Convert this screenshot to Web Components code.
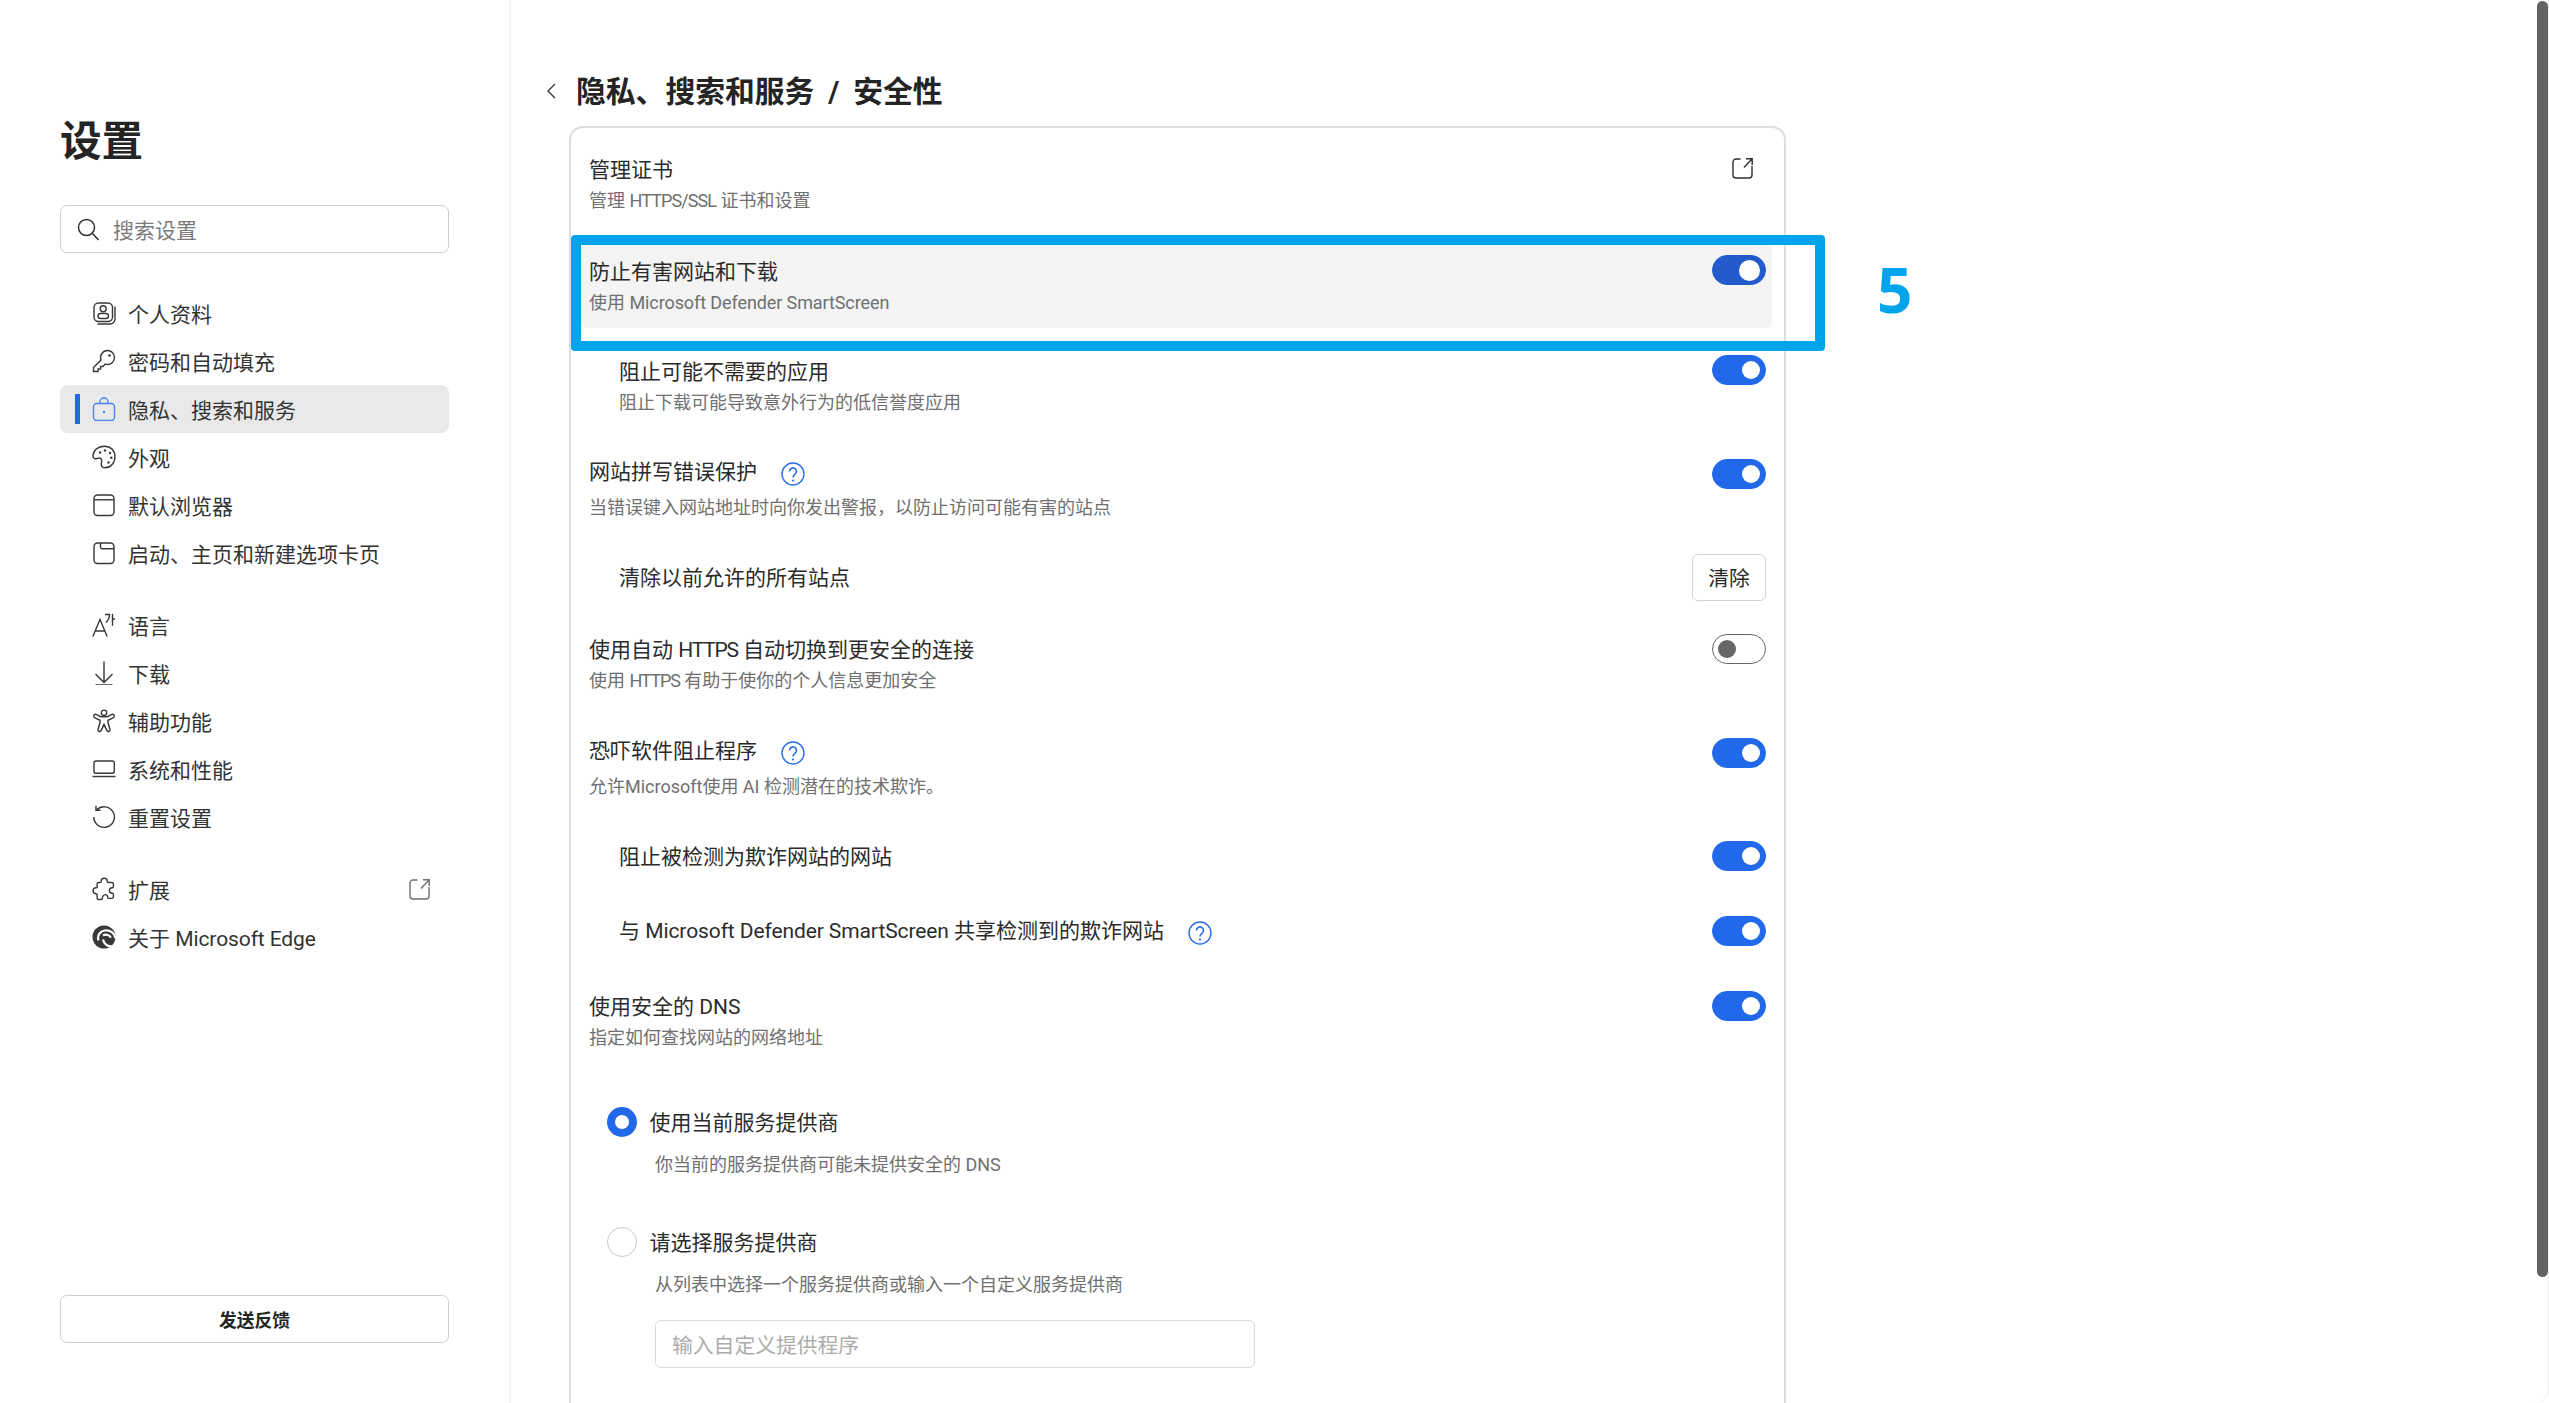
<!DOCTYPE html>
<html lang="zh-CN">
<head>
<meta charset="utf-8">
<title>设置</title>
<style>
  html, body { margin: 0; background: #fff; overflow: hidden; }
  body { font-family: Roboto, "Noto Sans CJK SC", sans-serif; color: #2b2b2b; }
</style>
</head>
<body>
<settings-app>
  <settings-sidebar slot="sidebar">
    <nav-group>
      <nav-item icon="profile">个人资料</nav-item>
      <nav-item icon="key">密码和自动填充</nav-item>
      <nav-item icon="lock" active>隐私、搜索和服务</nav-item>
      <nav-item icon="palette">外观</nav-item>
      <nav-item icon="browser">默认浏览器</nav-item>
      <nav-item icon="start">启动、主页和新建选项卡页</nav-item>
    </nav-group>
    <nav-group style="margin-top:24px">
      <nav-item icon="language">语言</nav-item>
      <nav-item icon="download">下载</nav-item>
      <nav-item icon="access">辅助功能</nav-item>
      <nav-item icon="laptop">系统和性能</nav-item>
      <nav-item icon="reset">重置设置</nav-item>
    </nav-group>
    <nav-group style="margin-top:24px">
      <nav-item icon="puzzle" external>扩展</nav-item>
      <nav-item icon="edge">关于 <span style="letter-spacing:-.1px">Microsoft Edge</span></nav-item>
    </nav-group>
  </settings-sidebar>

  <settings-main slot="main">
    <setting-row style="margin-top:15px">
      管理证书
      <span slot="sub">管理 <span style="letter-spacing:-.9px">HTTPS/SSL</span> 证书和设置</span>
      <ext-icon slot="end"></ext-icon>
    </setting-row>
    <setting-row hover style="margin-top:19px">
      防止有害网站和下载
      <span slot="sub">使用 <span style="letter-spacing:-.1px">Microsoft Defender SmartScreen</span></span>
      <toggle-switch slot="end" on hover></toggle-switch>
    </setting-row>
    <setting-row indent style="margin-top:17px">
      阻止可能不需要的应用
      <span slot="sub">阻止下载可能导致意外行为的低信誉度应用</span>
      <toggle-switch slot="end" on></toggle-switch>
    </setting-row>
    <setting-row tall style="margin-top:17px">
      网站拼写错误保护
      <help-icon slot="hint"></help-icon>
      <span slot="sub">当错误键入网站地址时向你发出警报，以防止访问可能有害的站点</span>
      <toggle-switch slot="end" on></toggle-switch>
    </setting-row>
    <setting-row indent single style="margin-top:20px">
      清除以前允许的所有站点
      <plain-button slot="end">清除</plain-button>
    </setting-row>
    <setting-row style="margin-top:22px">
      使用自动 <span style="letter-spacing:-1.200px">HTTPS</span> 自动切换到更安全的连接
      <span slot="sub">使用 <span style="letter-spacing:-1.200px">HTTPS</span> 有助于使你的个人信息更加安全</span>
      <toggle-switch slot="end" style="margin-top:1px"></toggle-switch>
    </setting-row>
    <setting-row tall style="margin-top:18px">
      恐吓软件阻止程序
      <help-icon slot="hint"></help-icon>
      <span slot="sub">允许Microsoft使用 AI 检测潜在的技术欺诈。</span>
      <toggle-switch slot="end" on></toggle-switch>
    </setting-row>
    <setting-row indent single style="margin-top:20px">
      阻止被检测为欺诈网站的网站
      <toggle-switch slot="end" on></toggle-switch>
    </setting-row>
    <setting-row indent single style="margin-top:26px">
      与 <span style="letter-spacing:-.1px">Microsoft Defender SmartScreen</span> 共享检测到的欺诈网站
      <help-icon slot="hint"></help-icon>
      <toggle-switch slot="end" on style="margin-top:1px"></toggle-switch>
    </setting-row>
    <setting-row style="margin-top:26px">
      使用安全的 DNS
      <span slot="sub">指定如何查找网站的网络地址</span>
      <toggle-switch slot="end" on style="margin-top:1px"></toggle-switch>
    </setting-row>
    <radio-option checked style="margin-top:44px">
      使用当前服务提供商
      <span slot="sub">你当前的服务提供商可能未提供安全的 DNS</span>
    </radio-option>
    <radio-option style="margin-top:50px">
      请选择服务提供商
      <span slot="sub">从列表中选择一个服务提供商或输入一个自定义服务提供商</span>
      <text-box slot="extra">输入自定义提供程序</text-box>
    </radio-option>
  </settings-main>

  <callout-box slot="over" style="left:571px;top:235px;width:1254px;height:116px"></callout-box>
  <callout-number slot="over" style="left:1877px;top:247px">5</callout-number>
  <window-scrollbar slot="over"></window-scrollbar>
</settings-app>

<script>
const ICONS = {
  profile: `<rect x="2" y="2" width="18.500" height="18.500" rx="4.500"/><path d="M23 5.500V18a5 5 0 0 1-5 5H5.500"/><circle cx="11.200" cy="7.800" r="3"/><rect x="6" y="12.500" width="10.500" height="5" rx="2.500"/>`,
  key: `<path d="M15.500 1.500a7 7 0 0 1 0 14 7 7 0 0 1-2.300-.4L11 17.500H8.500V20H6v2.500H1.500v-4L9 11a7 7 0 0 1 6.500-9.500z"/><circle cx="17.500" cy="6.500" r="1.300" fill="currentColor" stroke="none"/>`,
  lock: `<rect x="1.500" y="6.500" width="21" height="17" rx="3.500"/><path d="M8 6.500V5a4 4 0 0 1 8 0v1.500"/><circle cx="12" cy="15" r="1.200" fill="currentColor" stroke="none"/>`,
  palette: `<path d="M12.500 1.200C6 1.200 1 5.500 1 10.800c0 2.200 1.500 3.200 3 2.900l2.500-.6c2-.4 3.500 1 3.200 3l-.4 2.400c-.4 2.800 1.500 4.300 3.700 4.300 5.800 0 10-5 10-11.200S18.500 1.200 12.500 1.200z"/><g fill="currentColor" stroke="none"><circle cx="8" cy="7.500" r="1.200"/><circle cx="13" cy="5.500" r="1.200"/><circle cx="18" cy="8" r="1.200"/><circle cx="19.300" cy="12.800" r="1.200"/><circle cx="16.500" cy="17.500" r="1.200"/></g>`,
  browser: `<rect x="2" y="2" width="20" height="20.500" rx="3.500"/><path d="M2 6.800h20"/>`,
  start: `<rect x="2" y="2" width="20" height="20.500" rx="3.500"/><path d="M8.500 2v4a1.800 1.800 0 0 0 1.800 1.800H22"/>`,
  language: `<path d="M.8 23.500 8 6.500l7.200 17M3.300 18h9.400M13 1.500h4.500c0 3.500-1.200 6-3.800 8M20.500.8v12M20.500 6H23"/>`,
  download: `<path d="M12 .5v21M3.500 13l8.500 8.500 8.500-8.500M3.500 24h17"/>`,
  access: `<circle cx="12" cy="3.800" r="2.700"/><path d="M2 6c-.8 1.300 0 2.300 1 2.800l5 2.500v2.200L6 20.500c-.4 1.800 1.800 2.800 3 1.300l3-6.300 3 6.300c1.200 1.500 3.400.5 3-1.300l-2-7v-2.200l5-2.500c1-.5 1.800-1.500 1-2.800-.7-1-1.800-.9-2.800-.3l-3.700 2H8.500l-3.700-2C3.800 5.100 2.700 5 2 6z"/>`,
  laptop: `<rect x="2" y="4" width="20.300" height="12.300" rx="2"/><path d="M.5 19.500h23"/>`,
  reset: `<path d="M4.800 4.800A10.300 10.300 0 1 1 1.800 12M4 .8v4.500h4.500"/>`,
  puzzle: `<path d="M9.200 4.200c0-1.700 1.300-3 3-3s3 1.300 3 3c0 .7.300 1.300 1 1.300h3.600c.9 0 1.600.7 1.600 1.600v2.700c0 .6-.5.9-1.100.9-1.600 0-2.900 1.100-2.900 2.700s1.300 2.800 2.900 2.800c.6 0 1.100.3 1.100.9v2.700c0 .9-.7 1.600-1.600 1.600h-3.100c-.6 0-.9-.5-.9-1 0-1.600-1.100-2.800-2.700-2.800S10.300 20 10.300 21.300c0 .8-.4 1.200-1 1.200H6.700c-.9 0-1.600-.7-1.600-1.600v-3.200c0-.6-.4-.9-1-.9-1.600 0-3-1.200-3-3s1.400-3 3-3c.6 0 1-.3 1-.9V7.100c0-.9.7-1.600 1.600-1.600h1.300c.7 0 1.200-.6 1.200-1.300z"/>`,
  edge: `<circle cx="12" cy="12" r="11.500" fill="currentColor" stroke="none"/><path d="M23.500 13.500C23 8 18 4.500 12.500 5.500 8 6.300 5 10.500 6.500 15.500M11 10.500c3-1.700 7-.5 7.800 2.300M11 14.500c1 5 5 7.500 9.500 6.500" stroke="#fff" stroke-width="2.200"/>`
};

class NavItem extends HTMLElement {
  connectedCallback() {
    const icon = ICONS[this.getAttribute("icon")] || "";
    const ext = this.hasAttribute("external") ? `<ext-icon class="ext"></ext-icon>` : "";
    const root = this.attachShadow({ mode: "open" });
    root.innerHTML = `
      <style>
        :host { display: block; }
        .item { display: flex; align-items: center; height: 48px; padding-left: 15px; border-radius: 8px; font-size: 21px; color: #333; }
        .bar { width: 5px; height: 30px; margin-right: 12px; flex: none; }
        svg { width: 24px; height: 24px; margin-right: 12px; fill: none; stroke: currentColor; stroke-width: 1.400; flex: none; color: #383838; }
        :host([active]) .item { background: #e9e9e9; }
        :host([active]) .bar { background: #2268ea; }
        :host([active]) svg { color: #4a86ee; }
        .ext { margin: 0 19px 0 auto; --ext-color: #707070; }
      </style>
      <div class="item">
        <span class="bar"></span>
        <svg viewBox="0 0 24 24">${icon}</svg>
        <span><slot></slot></span>
        ${ext}
      </div>`;
  }
}

class NavGroup extends HTMLElement {
  constructor() {
    super();
    this.attachShadow({ mode: "open" }).innerHTML = `<style>:host { display: block; }</style><slot></slot>`;
  }
}

class SettingsSidebar extends HTMLElement {
  constructor() {
    super();
    this.attachShadow({ mode: "open" }).innerHTML = `
      <style>
        :host { display: flex; flex-direction: column; box-sizing: border-box; width: 511px; height: 1403px; padding: 116px 60px 60px 60px; border-right: 2px solid #f2f2f2; }
        h1 { margin: 0; font-size: 41.600px; line-height: 52px; font-weight: 700; color: #242424; }
        .search { display: flex; align-items: center; box-sizing: border-box; height: 48px; margin-top: 37px; padding-left: 15px; border: 1.500px solid #cfcfcf; border-radius: 7px; font-size: 21px; color: #7b7b7b; }
        .search svg { width: 24px; height: 24px; margin-right: 13px; fill: none; stroke: #2e2e2e; stroke-width: 1.500; }
        .nav { margin-top: 36px; }
        .feedback { display: flex; align-items: center; justify-content: center; box-sizing: border-box; height: 48px; margin-top: auto; border: 1.500px solid #cfcfcf; border-radius: 7px; font-size: 17.800px; font-weight: 700; color: #242424; }
      </style>
      <h1>设置</h1>
      <div class="search">
        <svg viewBox="0 0 24 24"><circle cx="10.500" cy="10.500" r="8"/><path d="M16.500 16.500l6 6.500"/></svg>
        <span>搜索设置</span>
      </div>
      <div class="nav"><slot></slot></div>
      <div class="feedback">发送反馈</div>`;
  }
}

class SettingsMain extends HTMLElement {
  constructor() {
    super();
    this.attachShadow({ mode: "open" }).innerHTML = `
      <style>
        :host { display: block; flex: none; box-sizing: border-box; height: 1403px; padding: 71px 0 0 58px; overflow: hidden; }
        .head { display: flex; align-items: center; gap: 20px; margin-left: -22px; height: 40px; }
        .head svg { width: 9px; height: 18px; fill: none; stroke: #3a3a3a; stroke-width: 1.400; }
        h2 { margin: 1px 0 0; font-size: 29.800px; font-weight: 700; line-height: 39px; color: #242424; white-space: pre; word-spacing: 6.500px; }
        .card { box-sizing: border-box; width: 1217px; height: 1400px; margin-top: 15px; padding: 0 12px 0 9px; border: 2px solid #dedede; border-bottom: 0; border-radius: 14px 14px 0 0; }
      </style>
      <div class="head">
        <svg viewBox="0 0 9 18"><path d="M8 2 1 9l7 7"/></svg>
        <h2>隐私、搜索和服务 / 安全性</h2>
      </div>
      <div class="card"><slot></slot></div>`;
  }
}

class SettingRow extends HTMLElement {
  constructor() {
    super();
    this.attachShadow({ mode: "open" }).innerHTML = `
      <style>
        :host { display: flex; justify-content: space-between; align-items: flex-start; box-sizing: border-box; height: 83px; padding: 10px 6px 14px 9px; border-radius: 6px; }
        :host([hover]) { background: #f4f4f4; }
        :host([tall]) { height: 88px; }
        :host([single]) { height: 48px; padding-top: 0; padding-bottom: 0; align-items: center; }
        :host([indent]) .text { padding-left: 30px; }
        .text { margin-top: 3px; }
        :host([single]) .text { margin-top: 1px; }
        .title { display: flex; align-items: center; gap: 24px; height: 28px; font-size: 21px; line-height: 28px; color: #2b2b2b; white-space: nowrap; }
        .sub { margin-top: 5px; font-size: 18px; line-height: 24px; color: #707070; white-space: nowrap; }
        :host([tall]) .sub { margin-top: 10px; }
        :host([single]) .sub { display: none; }
        :host([tall]) .end { margin-top: 4px; }
      </style>
      <div class="text">
        <div class="title"><span><slot></slot></span><slot name="hint"></slot></div>
        <div class="sub"><slot name="sub"></slot></div>
      </div>
      <div class="end"><slot name="end"></slot></div>`;
  }
}

class ToggleSwitch extends HTMLElement {
  constructor() {
    super();
    this.attachShadow({ mode: "open" }).innerHTML = `
      <style>
        :host { display: flex; align-items: center; box-sizing: border-box; width: 54px; height: 30px; padding: 0 6px; border: 1.200px solid #666; border-radius: 15px; justify-content: flex-start; }
        i { display: block; width: 18px; height: 18px; border-radius: 50%; background: #666; margin-left: -1px; }
        :host([on]) { background: #2268ea; border-color: #2268ea; justify-content: flex-end; }
        :host([on]) i { background: #fff; margin: 0 -1px 0 0; }
        :host([hover]) { background: #235bcd; border-color: #235bcd; }
        :host([hover]) i { width: 21px; height: 21px; }
      </style>
      <i></i>`;
  }
}

class HelpIcon extends HTMLElement {
  constructor() {
    super();
    this.attachShadow({ mode: "open" }).innerHTML = `
      <style>
        :host { display: block; width: 24px; height: 24px; margin-top: 4px; }
        svg { display: block; width: 24px; height: 24px; fill: none; stroke: #2b6eea; stroke-width: 1.400; }
      </style>
      <svg viewBox="0 0 24 24">
        <circle cx="12" cy="12" r="11"/>
        <path d="M8.500 9.500a3.500 3.500 0 1 1 5.500 2.800c-1.300.9-2 1.500-2 3.200" stroke-width="1.600"/>
        <circle cx="12" cy="18.500" r="1.100" fill="#2b6eea" stroke="none"/>
      </svg>`;
  }
}

class ExtIcon extends HTMLElement {
  constructor() {
    super();
    this.attachShadow({ mode: "open" }).innerHTML = `
      <style>
        :host { display: block; width: 21px; height: 21px; margin: 5px 13px 0 0; }
        svg { display: block; width: 21px; height: 21px; fill: none; stroke: var(--ext-color, #2e2e2e); stroke-width: 1.400; }
      </style>
      <svg viewBox="0 0 21 21">
        <path d="M8.500 1H4a3 3 0 0 0-3 3v13a3 3 0 0 0 3 3h13a3 3 0 0 0 3-3V8"/>
        <path d="M12 9.500 20 1M14 .8h6.200V7"/>
      </svg>`;
  }
}

class PlainButton extends HTMLElement {
  constructor() {
    super();
    this.attachShadow({ mode: "open" }).innerHTML = `
      <style>
        :host { display: flex; align-items: center; justify-content: center; box-sizing: border-box; width: 74px; height: 47px; border: 1.500px solid #d2d2d2; border-radius: 6px; font-size: 20.800px; color: #2b2b2b; }
      </style>
      <slot></slot>`;
  }
}

class RadioOption extends HTMLElement {
  constructor() {
    super();
    this.attachShadow({ mode: "open" }).innerHTML = `
      <style>
        :host { display: block; padding-left: 27px; }
        .head { display: flex; align-items: center; gap: 12.500px; height: 30px; font-size: 21px; color: #2b2b2b; }
        .head span:last-child { padding-bottom: 2px; }
        .dot { box-sizing: border-box; width: 30px; height: 30px; border: 1.200px solid #c9c9c9; border-radius: 50%; }
        :host([checked]) .dot { border: 8px solid #2268ea; }
        .sub { margin: 16px 0 0 48px; font-size: 18px; line-height: 24px; color: #707070; }
      </style>
      <div class="head"><span class="dot"></span><span><slot></slot></span></div>
      <div class="sub"><slot name="sub"></slot></div>
      <slot name="extra"></slot>`;
  }
}

class TextBox extends HTMLElement {
  constructor() {
    super();
    this.attachShadow({ mode: "open" }).innerHTML = `
      <style>
        :host { display: flex; align-items: center; box-sizing: border-box; width: 600px; height: 48px; margin: 23px 0 0 48px; padding-left: 16px; border: 1.500px solid #dadada; border-radius: 6px; font-size: 20.800px; color: #acacac; }
      </style>
      <slot></slot>`;
  }
}

class CalloutBox extends HTMLElement {
  constructor() {
    super();
    this.attachShadow({ mode: "open" }).innerHTML = `
      <style>
        :host { position: absolute; box-sizing: border-box; border: 10px solid #00a4ea; border-radius: 4px; }
      </style>`;
  }
}

class CalloutNumber extends HTMLElement {
  constructor() {
    super();
    this.attachShadow({ mode: "open" }).innerHTML = `
      <style>
        :host { position: absolute; font-family: "Open Sans", sans-serif; font-size: 62px; font-weight: 700; line-height: 84px; color: #00a4ea; }
      </style>
      <slot></slot>`;
  }
}

class WindowScrollbar extends HTMLElement {
  constructor() {
    super();
    this.attachShadow({ mode: "open" }).innerHTML = `
      <style>
        :host { position: absolute; left: 2537px; top: 1px; width: 11px; height: 1276px; border-radius: 6px; background: #636363; }
      </style>`;
  }
}

class SettingsApp extends HTMLElement {
  constructor() {
    super();
    this.attachShadow({ mode: "open" }).innerHTML = `
      <style>
        :host { display: flex; position: relative; box-sizing: border-box; width: 2549px; height: 1403px; border-right: 1px solid #ececec; border-bottom-right-radius: 14px; overflow: hidden; }
      </style>
      <slot name="sidebar"></slot>
      <slot name="main"></slot>
      <slot name="over"></slot>`;
  }
}

customElements.define("nav-item", NavItem);
customElements.define("nav-group", NavGroup);
customElements.define("settings-sidebar", SettingsSidebar);
customElements.define("settings-main", SettingsMain);
customElements.define("setting-row", SettingRow);
customElements.define("toggle-switch", ToggleSwitch);
customElements.define("help-icon", HelpIcon);
customElements.define("ext-icon", ExtIcon);
customElements.define("plain-button", PlainButton);
customElements.define("radio-option", RadioOption);
customElements.define("text-box", TextBox);
customElements.define("callout-box", CalloutBox);
customElements.define("callout-number", CalloutNumber);
customElements.define("window-scrollbar", WindowScrollbar);
customElements.define("settings-app", SettingsApp);
</script>
</body>
</html>
